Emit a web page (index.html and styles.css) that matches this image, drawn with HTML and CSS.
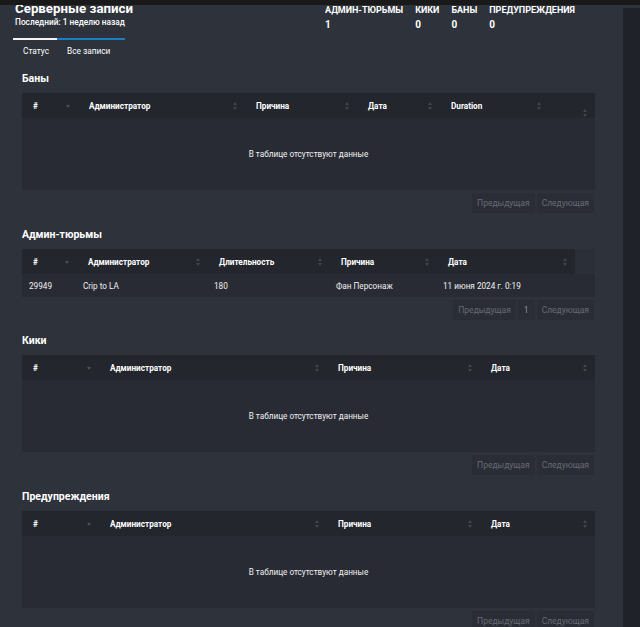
FILE: index.html
```html
<!doctype html>
<html lang="ru">
  <head>
    <meta charset="UTF-8" />
    <meta name="viewport" content="width=device-width, initial-scale=1.0" />
    <title>Серверные записи</title>
    <link rel="stylesheet" href="styles.css">
  </head>
  <body>
    <!-- Top strip -->
    <div class="top-strip"></div>

    <div class="layout">
      <main class="main">
        <!-- Header -->
        <header class="page-head">
          <div class="title-block">
            <h1 class="page-title">Серверные записи</h1>
            <div class="page-sub">Последний: 1 неделю назад</div>
          </div>
          <div class="stats">
            <div class="stat"><div class="stat-label">Админ-тюрьмы</div><div class="stat-value">1</div></div>
            <div class="stat"><div class="stat-label">Кики</div><div class="stat-value">0</div></div>
            <div class="stat"><div class="stat-label">Баны</div><div class="stat-value">0</div></div>
            <div class="stat"><div class="stat-label">Предупреждения</div><div class="stat-value">0</div></div>
          </div>
        </header>

        <!-- Tabs -->
        <nav class="tabs">
          <div class="tab tab-status">Статус</div>
          <div class="tab tab-all">Все записи</div>
        </nav>

        <div class="sections">
          <!-- Баны -->
          <section class="records">
            <h2 class="records-title">Баны</h2>
            <table class="grid">
              <colgroup><col style="width:56px"><col style="width:167px"><col style="width:112px"><col style="width:83px"><col style="width:109px"><col style="width:46px"></colgroup>
              <thead>
                <tr>
                  <th><div class="th-in">#<span class="sort sort-desc"></span></div></th>
                  <th><div class="th-in">Администратор<span class="sort"></span></div></th>
                  <th><div class="th-in">Причина<span class="sort"></span></div></th>
                  <th><div class="th-in">Дата<span class="sort"></span></div></th>
                  <th><div class="th-in">Duration<span class="sort"></span></div></th>
                  <th><div class="th-in"><span class="sort sort-low"></span></div></th>
                </tr>
              </thead>
              <tbody>
                <tr><td colspan="6" class="empty">В таблице отсутствуют данные</td></tr>
              </tbody>
            </table>
            <div class="pager">
              <span class="page-btn">Предыдущая</span>
              <span class="page-btn">Следующая</span>
            </div>
          </section>

          <!-- Админ-тюрьмы -->
          <section class="records records-jail">
            <h2 class="records-title">Админ-тюрьмы</h2>
            <table class="grid grid-jail">
              <colgroup><col style="width:55px"><col style="width:131px"><col style="width:122px"><col style="width:107px"><col style="width:138px"><col style="width:20px"></colgroup>
              <thead>
                <tr>
                  <th><div class="th-in">#<span class="sort sort-desc"></span></div></th>
                  <th><div class="th-in">Администратор<span class="sort"></span></div></th>
                  <th><div class="th-in">Длительность<span class="sort"></span></div></th>
                  <th><div class="th-in">Причина<span class="sort"></span></div></th>
                  <th><div class="th-in">Дата<span class="sort"></span></div></th>
                  <th class="gutter"></th>
                </tr>
              </thead>
              <tbody>
                <tr>
                  <td>29949</td>
                  <td>Crip to LA</td>
                  <td>180</td>
                  <td>Фан Персонаж</td>
                  <td>11 июня 2024 г. 0:19</td>
                  <td></td>
                </tr>
              </tbody>
            </table>
            <div class="pager">
              <span class="page-btn">Предыдущая</span>
              <span class="page-btn page-num">1</span>
              <span class="page-btn">Следующая</span>
            </div>
          </section>

          <!-- Кики -->
          <section class="records">
            <h2 class="records-title">Кики</h2>
            <table class="grid">
              <colgroup><col style="width:77px"><col style="width:228px"><col style="width:153px"><col style="width:115px"></colgroup>
              <thead>
                <tr>
                  <th><div class="th-in">#<span class="sort sort-desc"></span></div></th>
                  <th><div class="th-in">Администратор<span class="sort"></span></div></th>
                  <th><div class="th-in">Причина<span class="sort"></span></div></th>
                  <th><div class="th-in">Дата<span class="sort"></span></div></th>
                </tr>
              </thead>
              <tbody>
                <tr><td colspan="4" class="empty">В таблице отсутствуют данные</td></tr>
              </tbody>
            </table>
            <div class="pager">
              <span class="page-btn">Предыдущая</span>
              <span class="page-btn">Следующая</span>
            </div>
          </section>

          <!-- Предупреждения -->
          <section class="records">
            <h2 class="records-title">Предупреждения</h2>
            <table class="grid">
              <colgroup><col style="width:77px"><col style="width:228px"><col style="width:153px"><col style="width:115px"></colgroup>
              <thead>
                <tr>
                  <th><div class="th-in">#<span class="sort sort-desc"></span></div></th>
                  <th><div class="th-in">Администратор<span class="sort"></span></div></th>
                  <th><div class="th-in">Причина<span class="sort"></span></div></th>
                  <th><div class="th-in">Дата<span class="sort"></span></div></th>
                </tr>
              </thead>
              <tbody>
                <tr><td colspan="4" class="empty">В таблице отсутствуют данные</td></tr>
              </tbody>
            </table>
            <div class="pager">
              <span class="page-btn">Предыдущая</span>
              <span class="page-btn">Следующая</span>
            </div>
          </section>
        </div>
      </main>

      <aside class="side"></aside>
    </div>
  </body>
</html>
```

FILE: styles.css
```css
/* Base */
html, body {
  margin: 0;
  padding: 0;
  height: 100%;
  overflow: hidden;
}

body {
  background: #2e323b;
  color: #f2f2f2;
  font-family: Roboto, "Noto Sans", sans-serif;
}

/* Top strip over the page */
.top-strip {
  position: fixed;
  top: 0;
  left: 0;
  right: 0;
  height: 5px;
  background: #191919;
  z-index: 10;
}

.layout {
  display: flex;
  height: 100%;
}

.main {
  width: 623px;
  flex: none;
  padding-left: 13px;
  box-sizing: border-box;
}

.side {
  flex: 1;
  margin-top: 8px;
  background: #1f2228;
}

/* Header */
.page-head {
  display: grid;
  grid-template-columns: 312px auto;
  align-items: start;
  height: 29px;
  padding-top: 1px;
  box-sizing: border-box;
}

.title-block {
  padding-left: 2px;
}

.page-title {
  margin: 0;
  font-size: 13.3px;
  line-height: 15px;
  font-weight: 700;
  color: #ffffff;
  white-space: nowrap;
}

.page-sub {
  font-size: 8.3px;
  line-height: 12px;
  font-weight: 500;
  color: #ffffff;
  white-space: nowrap;
}

.stats {
  display: flex;
  gap: 12px;
  padding-top: 4px;
}

.stat-label {
  font-size: 9px;
  line-height: 11px;
  font-weight: 700;
  text-transform: uppercase;
  color: #ffffff;
  white-space: nowrap;
}

.stat-value {
  font-size: 10px;
  line-height: 11px;
  font-weight: 700;
  color: #ffffff;
  margin-top: 3px;
}

/* Tabs */
.tabs {
  display: flex;
  margin-top: 9px;
}

.tab {
  font-size: 8.3px;
  line-height: 10px;
  color: #ffffff;
  padding: 6px 0 4px 10px;
  border-top: 2px solid transparent;
  white-space: nowrap;
  box-sizing: border-box;
}

.tab-status {
  width: 44px;
  border-top-color: #f4f4f4;
}

.tab-all {
  width: 68px;
  border-top-color: #1b7ec4;
}

/* Sections */
.sections {
  padding: 11px 0 0 9px;
}

.records {
  width: 573px;
  margin-bottom: 14px;
}

.records-jail {
  margin-bottom: 13px;
}

.records-title {
  margin: 0 0 6px;
  font-size: 10.5px;
  line-height: 16px;
  font-weight: 700;
  color: #ffffff;
}

.grid {
  width: 573px;
  border-collapse: collapse;
  table-layout: fixed;
  font-size: 8.2px;
}

.grid thead th {
  background: #23262d;
  height: 25px;
  padding: 0;
  text-align: left;
  font-weight: 700;
  color: #ffffff;
  vertical-align: middle;
  white-space: nowrap;
}

.th-in {
  display: flex;
  justify-content: space-between;
  align-items: center;
  padding: 0 6px 0 11px;
  height: 25px;
}

.grid thead th.gutter {
  background: #2b2f37;
}

.grid tbody td {
  background: #282b33;
  color: #f0f0f0;
  white-space: nowrap;
}

.grid-jail tbody td {
  height: 23px;
  padding: 0 0 0 6px;
}

.grid-jail tbody td:first-child {
  padding-left: 7px;
}

.grid tbody td.empty {
  height: 72px;
  text-align: center;
  padding: 0;
}

/* Sort arrows */
.sort {
  flex: none;
  width: 4px;
  height: 8px;
  position: relative;
  margin-right: 2px;
}

.sort::before,
.sort::after {
  content: "";
  position: absolute;
  left: 0;
  border-left: 2px solid transparent;
  border-right: 2px solid transparent;
}

.sort::before {
  top: 0;
  border-bottom: 3px solid #41464f;
}

.sort::after {
  bottom: 0;
  border-top: 3px solid #41464f;
}

.sort-desc::before {
  display: none;
}

.sort-desc::after {
  bottom: 2px;
  border-top-color: #4b5059;
}

.sort-low {
  margin-top: 14px;
  margin-left: auto;
}

/* Pager */
.pager {
  display: flex;
  justify-content: flex-end;
  gap: 2px;
  margin-top: 3px;
  padding-right: 1px;
}

.page-btn {
  background: #2a2d35;
  color: #666b74;
  font-size: 8.5px;
  line-height: 20px;
  height: 20px;
  padding: 0 5px;
  white-space: nowrap;
}

.page-num {
  color: #8b9099;
  padding: 0 6px;
}
```
